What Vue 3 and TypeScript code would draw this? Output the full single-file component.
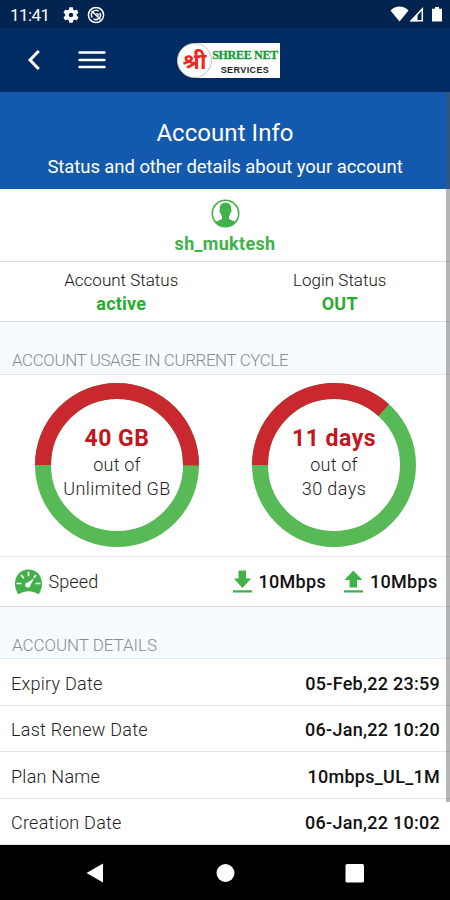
<script setup lang="ts">
interface Gauge { value: string; total: string; fraction: number; id: string }
interface Detail { label: string; value: string }

const gauges: Gauge[] = [
  { id: 'data', value: '40 GB', total: 'Unlimited GB', fraction: 0.5 },
  { id: 'days', value: '11 days', total: '30 days', fraction: 11 / 30 },
]
const details: Detail[] = [
  { label: 'Expiry Date', value: '05-Feb,22 23:59' },
  { label: 'Last Renew Date', value: '06-Jan,22 10:20' },
  { label: 'Plan Name', value: '10mbps_UL_1M' },
  { label: 'Creation Date', value: '06-Jan,22 10:02' },
]
const radius = 74
const circumference = 2 * Math.PI * radius
// The days gauge is drawn as 11 of 30 days, the data gauge as a half ring.
const dash = (g: Gauge) => `${circumference * g.fraction} ${circumference}`
</script>

<template>
  <div class="screen">
    <div class="statusbar">
      <span class="clock">11:41</span>
      <svg class="gear" width="16" height="16" viewBox="2 2 20 20"><path fill="#fff" fill-rule="evenodd" d="M19.14 12.94c.04-.3.06-.61.06-.94s-.02-.64-.07-.94l2.03-1.58c.18-.14.23-.41.12-.61l-1.92-3.32c-.12-.22-.37-.29-.59-.22l-2.39.96c-.5-.38-1.03-.7-1.62-.94l-.36-2.54c-.04-.24-.24-.41-.48-.41h-3.84c-.24 0-.43.17-.47.41l-.36 2.54c-.59.24-1.13.57-1.62.94l-2.39-.96c-.22-.08-.47 0-.59.22L2.74 8.87c-.12.21-.08.47.12.61l2.03 1.58c-.05.3-.09.63-.09.94s.02.64.07.94l-2.03 1.58c-.18.14-.23.41-.12.61l1.92 3.32c.12.22.37.29.59.22l2.39-.96c.5.38 1.03.7 1.62.94l.36 2.54c.05.24.24.41.48.41h3.84c.24 0 .44-.17.47-.41l.36-2.54c.59-.24 1.13-.56 1.62-.94l2.39.96c.22.08.47 0 .59-.22l1.92-3.32c.12-.22.07-.47-.12-.61zM12 14.8a2.8 2.8 0 1 1 0-5.6 2.8 2.8 0 0 1 0 5.6z" /></svg>
      <svg class="sync" width="18" height="18" viewBox="0 0 18 18" fill="none" stroke="#fff"><circle cx="9" cy="9" r="7.6" stroke-width="1.5" /><path d="M5.2 11.5A4.6 4.6 0 0 1 11.6 5.2M12.9 6.8A4.6 4.6 0 0 1 6.5 12.9" stroke-width="1.5" /><path d="M4.5 4.8l9 8.8" stroke-width="1.4" /><path d="M8.3 7.2l3.5.4-.2 3z" fill="#fff" stroke="none" /></svg>
      <svg class="signals" width="54" height="18" viewBox="0 0 54 18">
        <path fill="#fff" d="M0 4.500C5-.8 13-.8 18 4.500L9 15.500z" transform="translate(1.500 0)" />
        <path fill="none" stroke="#fff" stroke-width="1.500" d="M22.300 14.700L33.300 3V14.700z" /><path fill="#fff" d="M21 15.200L28.500 7.500v7.700z" />
        <path fill="#fff" d="M46 1h4v1.700h3V15.500h-10V2.700h3z" />
      </svg>
    </div>

    <header class="appbar">
      <svg class="back" width="14" height="22" viewBox="0 0 14 22"><path d="M11.8 2L3 11l8.800 9" fill="none" stroke="#fff" stroke-width="3" /></svg>
      <svg class="menu" width="28" height="18" viewBox="0 0 28 18"><path d="M1.500 1.500h25M1.500 9h25M1.500 16h25" stroke="#fff" stroke-width="2.400" stroke-linecap="round" /></svg>
      <div class="logo">
        <div class="seal">श्री</div>
        <div class="brand"><span class="name">SHREE NET</span><span class="sub">SERVICES</span></div>
      </div>
    </header>

    <main class="body">
      <section class="hero">
        <h1>Account Info</h1>
        <p>Status and other details about your account</p>
      </section>

      <section class="user">
        <svg width="29" height="29" viewBox="0 0 29 29"><circle cx="14.500" cy="14.500" r="13.200" fill="#fff" stroke="#43b149" stroke-width="1.600" /><path fill="#43b149" d="M14.500 3.800c4.500 0 6 2.800 5.600 6.700.9.300.5 3-.6 3.400-.4 1.700-.9 2.600-1.500 3.200v2.600c1 1.400 4.500 1.500 6.500 3.500A13.200 13.200 0 0 1 4.500 23.200c2-2 5.500-2.100 6.500-3.500v-2.600c-.6-.6-1.100-1.500-1.500-3.200-1.100-.4-1.500-3.100-.6-3.400-.4-3.900 1.100-6.700 5.600-6.700z" /></svg>
        <span class="username">sh_muktesh</span>
      </section>

      <section class="states">
        <div class="state"><span>Account Status</span><b class="on">active</b></div>
        <div class="state"><span>Login Status</span><b>OUT</b></div>
      </section>

      <h2 class="first">ACCOUNT USAGE IN CURRENT CYCLE</h2>

      <section class="gauges">
        <div v-for="g in gauges" :key="g.id" class="gauge">
          <svg width="166" height="166" viewBox="0 0 166 166" fill="none" stroke-width="16">
            <circle cx="83" cy="83" :r="radius" stroke="#58b957" />
            <circle cx="83" cy="83" :r="radius" stroke="#c9282e" :stroke-dasharray="dash(g)" transform="rotate(180 83 83)" />
          </svg>
          <div class="reading" :class="g.id"><b>{{ g.value }}</b><span>out of</span><span class="total">{{ g.total }}</span></div>
        </div>
      </section>

      <section class="speed">
        <svg class="meter" width="29" height="26" viewBox="0 0 29 26"><path fill="#43b149" d="M3.500 24.200C-3 11.500 4 .5 14.500.5s17.500 11 11 23.700c-.4.900-1.400 1-2.100.5-5-3.400-12.800-3.400-17.800 0-.7.5-1.700.4-2.100-.5z" /><g stroke="#fff" stroke-width="1.700"><path d="M14.500 2.800v4.500M7 6l2.800 3.300M22 6l-2.200 2.700M2.500 14.500h5M21.500 14.500h5" /></g><path fill="#fff" d="M20.200 9.200l-3.800 6.700a2.600 2.600 0 1 1-2.800-2.500z" /></svg>
        <span class="label">Speed</span>
        <svg class="arrow" width="19" height="24" viewBox="0 0 19 24" fill="#43b149"><path d="M5.500 0.500h7.500v8h5.200L9.300 18 0.800 8.500h4.700zM0 20.200h19v2.300H0z" /></svg>
        <b>10Mbps</b>
        <svg class="arrow up" width="19" height="24" viewBox="0 0 19 24" fill="#43b149"><path d="M9.300 0.500L18.500 10H13v7.500H5.500V10H.4zM0 20.200h19v2.300H0z" /></svg>
        <b>10Mbps</b>
      </section>

      <h2 class="second">ACCOUNT DETAILS</h2>

      <dl>
        <div v-for="d in details" :key="d.label" class="row"><dt>{{ d.label }}</dt><dd>{{ d.value }}</dd></div>
      </dl>
      <i class="thumb"></i>
    </main>

    <nav class="navbar">
      <svg width="450" height="55" viewBox="0 0 450 55" fill="#fff"><path d="M86.500 28L103 18.500v19z" /><circle cx="225.500" cy="28" r="9" /><rect x="345.500" y="19" width="18.500" height="18.500" rx="1.500" /></svg>
    </nav>
  </div>
</template>

<style>
body { margin: 0; background: #000; }
</style>

<style scoped>
.screen { width: 450px; height: 900px; overflow: hidden; display: flex; flex-direction: column; background: #fff; font-family: Roboto, sans-serif; color: #222; }
.screen * { box-sizing: border-box; }
.screen svg { display: block; flex: none; }
.statusbar { height: 28px; background: #00234f; display: flex; align-items: center; color: #fff; padding: 1px 8px 0 10px; }
.clock { font-size: 17px; letter-spacing: -.6px; width: 52.500px; }
.sync { margin-left: 8px; }
.signals { margin-left: auto; margin-right: -1px; }
.appbar { height: 64px; background: #002c63; display: flex; align-items: center; }
.back { margin-left: 27px; }
.menu { margin-left: 36.500px; }
.logo { margin-left: 71.500px; width: 103px; height: 35px; display: flex; }
.seal { width: 35px; height: 35px; border-radius: 50%; background: #fff; border: 1px solid #c5c5cf; color: #ed2921; font: 700 22px/33px "Noto Sans", "Noto Sans Devanagari", sans-serif; display: flex; justify-content: center; z-index: 1; }
.brand { flex: 1; margin-left: -17px; padding-left: 15px; background: #fff; display: flex; flex-direction: column; align-items: center; white-space: nowrap; }
.name { font: 700 12px/13px "Liberation Serif", serif; color: #119c35; margin-top: 6px; letter-spacing: -.3px; -webkit-text-stroke: .3px #119c35; }
.sub { font: 700 9px/10px "Liberation Sans", sans-serif; color: #222; letter-spacing: .4px; margin-top: 3px; }
.body { height: 753px; position: relative; display: flex; flex-direction: column; }
.hero { height: 97px; background: #1359ad; color: #fff; text-align: center; padding-top: 26px; }
h1 { margin: 0; font-size: 24px; line-height: 30px; font-weight: 400; letter-spacing: .05px; }
.hero p { margin: 6px 0 0; font-size: 18.500px; line-height: 26px; letter-spacing: -.07px; }
.user { height: 73px; border-bottom: 1px solid #ddd; display: flex; flex-direction: column; align-items: center; padding-top: 10px; }
.username { font-size: 18px; line-height: 24px; font-weight: 700; color: #43b149; margin-top: 4px; letter-spacing: .3px; }
.states { height: 60px; border-bottom: 1px solid #ddd; display: flex; padding: 7px 1px 0 12px; }
.state { flex: 1; display: flex; flex-direction: column; align-items: center; font-size: 17px; line-height: 23px; font-weight: 300; color: #111; }
.state b { font-weight: 700; font-size: 18px; line-height: 24px; color: #2aaa30; letter-spacing: .2px; }
h2 { margin: 0; height: 53px; background: #f5fbff; border-bottom: 1px solid #e2e8eb; padding: 28px 12px 0; font-size: 17px; line-height: 20px; font-weight: 300; color: #888c8f; }
.first { letter-spacing: -.43px; }
.gauges { height: 182px; border-bottom: 1px solid #e5e5e5; display: flex; gap: 51px; padding: 7px 0 0 34px; }
.gauge { display: grid; width: 166px; height: 166px; }
.gauge > * { grid-area: 1 / 1; }
.reading { display: flex; flex-direction: column; align-items: center; padding-top: 43px; font-size: 18px; line-height: 24px; font-weight: 300; color: #222; letter-spacing: .2px; }
.reading span { position: relative; top: 1px; }
.reading .total { letter-spacing: .4px; }
.reading b { font-size: 23px; line-height: 27px; font-weight: 700; color: #c4161c; letter-spacing: .5px; }
.speed { height: 50px; border-bottom: 1px solid #ddd; display: flex; align-items: center; padding: 0 12.500px 0 13.500px; font-size: 18px; }
.label { margin-left: 6px; font-weight: 300; margin-right: auto; letter-spacing: .1px; }
.speed b { font-weight: 500; margin-left: 7px; color: #111; letter-spacing: .3px; }
.up { margin-left: 18px; }
.second { height: 52px; letter-spacing: -.05px; }
dl { margin: 0; }
.row { height: 46.500px; border-bottom: 1px solid #e2e2e2; display: flex; justify-content: space-between; align-items: center; padding: 3px 10px 0 11px; font-size: 18px; }
dt { font-weight: 300; letter-spacing: .26px; }
dd { margin: 0; font-weight: 500; color: #111; letter-spacing: .27px; }
.thumb { position: absolute; top: 0; right: 0; width: 4px; height: 710px; background: rgba(80, 80, 80, .42); }
.navbar { height: 55px; background: #000; }
</style>
